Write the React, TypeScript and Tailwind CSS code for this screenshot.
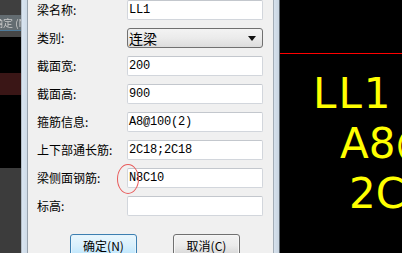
import React from "react"

const rows = [
    { label: "梁名称:", value: "LL1" },
    { label: "类别:", value: "连梁", select: true },
    { label: "截面宽:", value: "200" },
    { label: "截面高:", value: "900" },
    { label: "箍筋信息:", value: "A8@100(2)" },
    { label: "上下部通长筋:", value: "2C18;2C18" },
    { label: "梁侧面钢筋:", value: "N8C10" },
    { label: "标高:", value: "" },
]

const cjk = "font-['Noto_Sans_CJK_SC',_'DejaVu_Sans',_sans-serif]"

const Field = ({ value, select }: { value: string; select?: boolean }) => {
    if (select) {
        return (
            <div className="h-[20px] rounded-[3px] border border-[#707070] bg-gradient-to-b from-[#f3f3f3] via-[#ebebeb] to-[#dcdcdc] flex items-center justify-between pl-[1px] pr-[6px]">
                <span className={`text-[14px] leading-none text-black ${cjk}`}>{value}</span>
                <svg width="8" height="5" viewBox="0 0 8 5">
                    <polygon points="0,0 8,0 4,5" fill="#111" />
                </svg>
            </div>
        )
    }
    return (
        <div className="h-[20px] rounded-[2px] border border-[#d2d6dc] border-t-[#c3c7cd] bg-white flex items-center pl-[1px]">
            <span className="text-[12px] leading-none text-black font-['Liberation_Mono',_monospace] tracking-[-0.2px]">{value}</span>
        </div>
    )
}

const App = () => {
    return (
        <div className="w-[402px] h-[253px] overflow-hidden flex bg-black">
            {/* background app behind the dialog */}
            <div className="w-[21px] flex flex-col overflow-hidden">
                <div className="h-[15px] bg-[#3f3f3f]"></div>
                <div className="h-[15px] bg-[#636c71] flex items-center overflow-hidden">
                    <span className={`-ml-[7px] whitespace-nowrap text-[10px] leading-none text-[#c9c9c9] blur-[0.4px] ${cjk}`}>确定 (N)</span>
                </div>
                <div className="h-[1px] bg-[#4f7c9c]"></div>
                <div className="h-[6px] bg-[#474747]"></div>
                <div className="h-[36px] bg-black"></div>
                <div className="h-[22px] bg-[#3a1616]"></div>
                <div className="h-[73px] bg-black"></div>
                <div className="flex-1 bg-[#3c3c3c]"></div>
            </div>

            {/* dialog left frame */}
            <div className="w-[7px] flex">
                <div className="w-[1px] bg-[#b4bec8]"></div>
                <div className="w-[5px] bg-gradient-to-r from-[#d9e5f1] to-[#cfdbe7]"></div>
                <div className="w-[1px] bg-[#97a2ad]"></div>
            </div>

            {/* dialog body */}
            <div className="w-[245px] bg-[#f0f0f0] relative overflow-hidden flex flex-col pl-[9px] pr-[10px]">
                <div className="grid grid-cols-[90px_136px] auto-rows-[20px] gap-y-2">
                    {rows.map((r) => (
                        <React.Fragment key={r.label}>
                            <div className={`flex items-center text-[12px] leading-none text-black ${cjk}`}>{r.label}</div>
                            <Field value={r.value} select={r.select} />
                        </React.Fragment>
                    ))}
                </div>
                <div className="flex gap-[36px] mt-[18px] pl-[33px]">
                    <div className="w-[67px] h-[23px] shrink-0 rounded-[3px] border border-[#3c7fb1] p-[1px] bg-[#e6f4fc]">
                        <div className="h-full rounded-[2px] bg-gradient-to-b from-[#e8f6fd] via-[#d9f0fc] to-[#bee6fd] flex items-center justify-center">
                            <span className={`text-[12px] leading-none text-black ${cjk}`}>确定(N)</span>
                        </div>
                    </div>
                    <div className="w-[67px] h-[23px] shrink-0 rounded-[3px] border border-[#707070] p-[1px] bg-[#f6f6f6]">
                        <div className="h-full rounded-[2px] bg-gradient-to-b from-[#f2f2f2] via-[#ebebeb] to-[#d6d6d6] flex items-center justify-center">
                            <span className={`text-[12px] leading-none text-black ${cjk}`}>取消(C)</span>
                        </div>
                    </div>
                </div>
                {/* red annotation ellipse */}
                <div className="absolute left-[89px] top-[164px] w-[22px] h-[30px] rounded-[50%] border border-[#e85a5a]"></div>
            </div>

            {/* dialog right frame */}
            <div className="w-[7px] flex">
                <div className="w-[1px] bg-[#a3adb7]"></div>
                <div className="w-[5px] bg-gradient-to-r from-[#d6e1ec] to-[#c9d5e1]"></div>
                <div className="w-[1px] bg-[#5b646c]"></div>
            </div>

            {/* CAD canvas */}
            <div className="flex-1 relative bg-black overflow-hidden font-['DejaVu_Sans',_sans-serif] text-[#ffff00] text-[42px] leading-none whitespace-nowrap">
                <div className="absolute left-0 right-0 top-[53px] h-[1px] bg-[#ff0000]"></div>
                <div className="absolute left-[33px] top-[73px] tracking-[2px] [word-spacing:-3px]">LL1 200x900</div>
                <div className="absolute left-[60px] top-[123px]">A8@100(2)</div>
                <div className="absolute left-[69px] top-[173px]">2C18;2C18</div>
            </div>
        </div>
    )
}

export default App
